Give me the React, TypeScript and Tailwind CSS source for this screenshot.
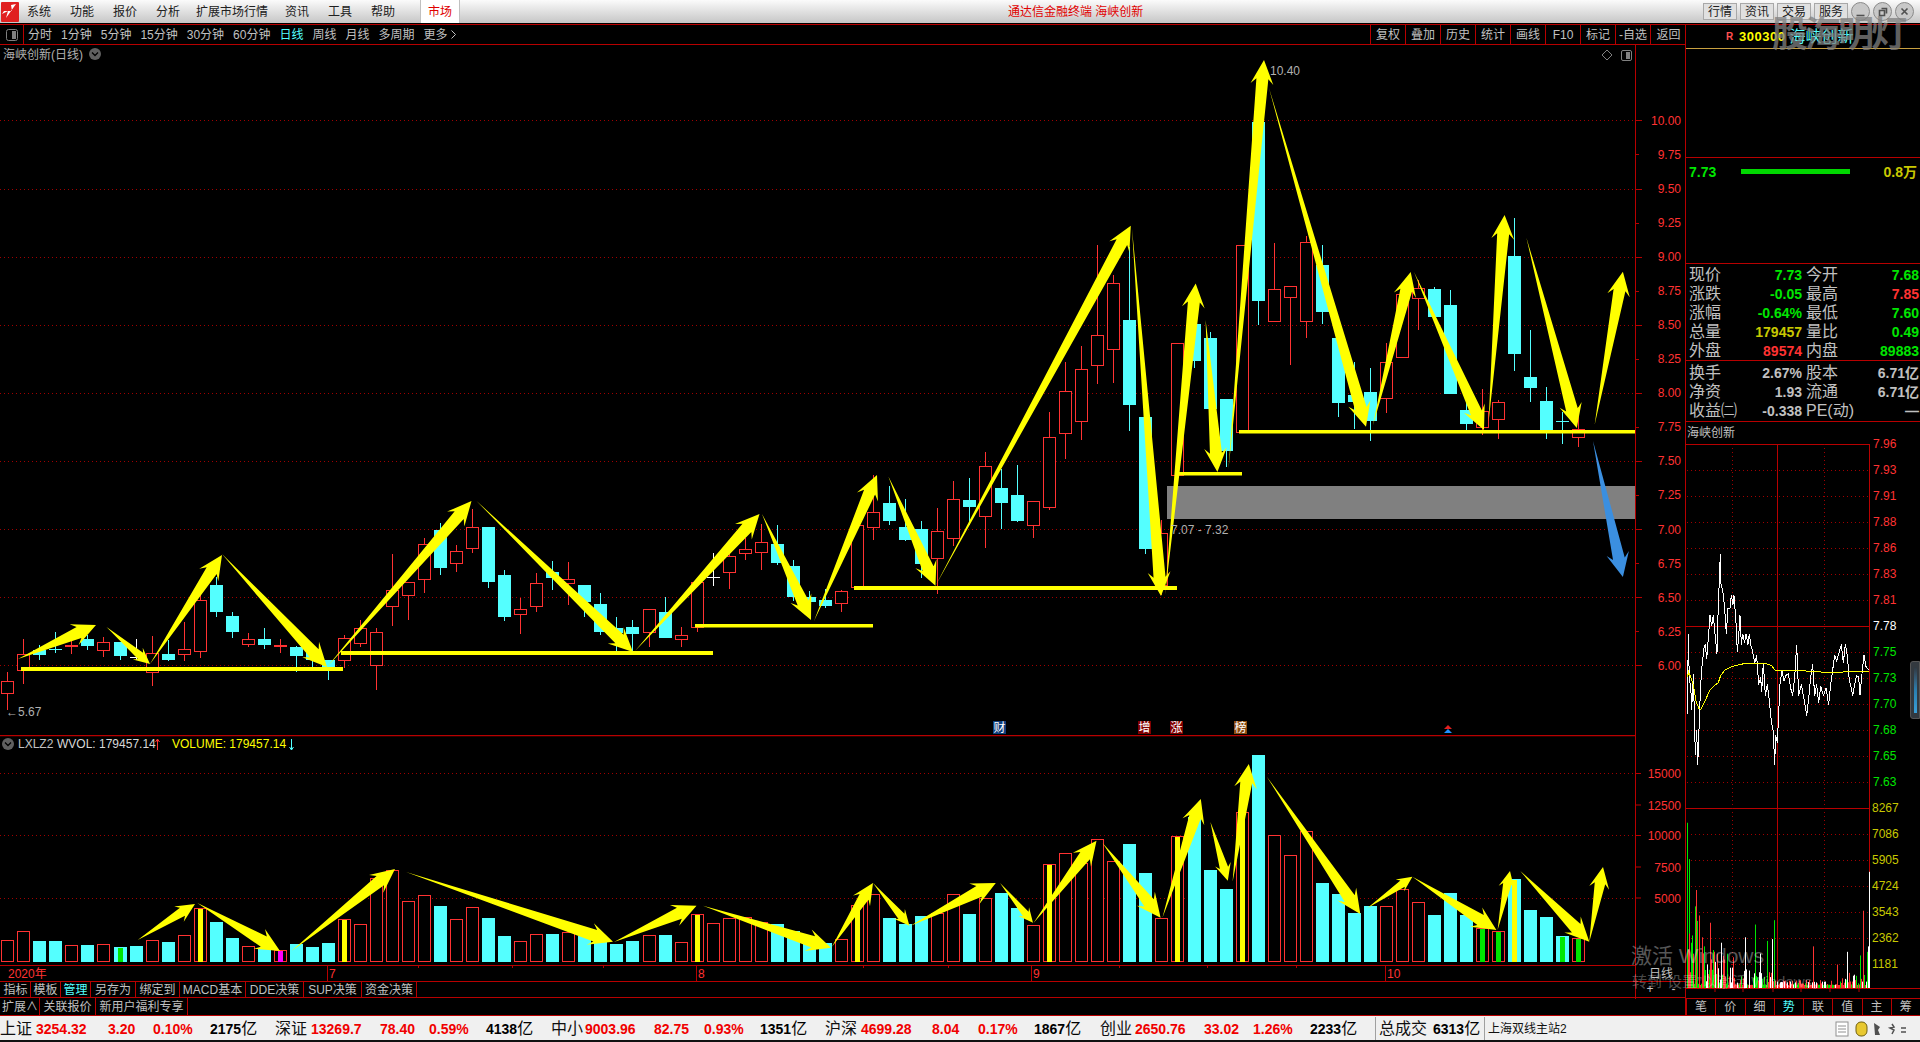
import { ReactNode } from "react";

const RED = "#b80000";
const DOT = "#a00000";
const CRED = "#ff3232";
const CYAN = "#54ffff";
const YEL = "#ffff00";

// [high, bodyTop, bodyBottom, low, colour] in page pixels. 0 red, 1 cyan, 2 white
const candles: number[][] = [
  [672, 681, 693, 710, 0], [639, 654, 670, 684, 0], [645, 650, 655, 660, 1], [632, 649, 650, 653, 1],
  [637, 645, 647, 654, 3], [635, 639, 646, 650, 1], [637, 642, 650, 657, 0], [642, 642, 656, 660, 1],
  [639, 657, 658, 660, 2], [636, 653, 672, 686, 0], [640, 654, 660, 661, 1], [622, 649, 654, 661, 0],
  [594, 600, 651, 658, 0], [577, 585, 612, 617, 1], [612, 616, 632, 638, 1], [633, 639, 644, 647, 0],
  [628, 639, 645, 649, 1], [639, 645, 647, 653, 3], [646, 647, 656, 672, 1], [648, 650, 660, 668, 1],
  [660, 660, 667, 680, 1], [635, 638, 660, 668, 0], [620, 628, 643, 647, 0], [628, 632, 665, 690, 0],
  [554, 590, 606, 626, 0], [582, 582, 595, 620, 0], [538, 544, 579, 593, 0], [523, 530, 568, 575, 1],
  [545, 551, 563, 572, 0], [509, 527, 548, 553, 0], [527, 527, 582, 588, 1], [570, 575, 617, 621, 1],
  [598, 609, 614, 634, 0], [573, 583, 606, 612, 0], [561, 572, 578, 590, 1], [562, 579, 583, 605, 0],
  [585, 585, 602, 617, 1], [593, 604, 632, 635, 1], [617, 628, 633, 652, 1], [620, 627, 634, 652, 1],
  [609, 609, 632, 647, 0], [597, 612, 638, 638, 1], [627, 635, 639, 647, 0], [582, 582, 627, 632, 0],
  [553, 577, 578, 586, 2], [550, 556, 572, 589, 0], [538, 549, 553, 560, 0], [524, 542, 552, 570, 0],
  [525, 544, 563, 565, 1], [560, 566, 597, 601, 1], [591, 597, 602, 604, 1], [589, 600, 606, 608, 1],
  [590, 591, 603, 612, 0], [525, 525, 587, 587, 0], [475, 512, 527, 540, 0], [486, 503, 521, 525, 1],
  [499, 527, 540, 541, 1], [521, 529, 564, 578, 1], [508, 531, 558, 594, 0], [481, 499, 538, 546, 0],
  [478, 500, 507, 525, 1], [452, 466, 516, 548, 0], [469, 488, 503, 529, 1], [465, 495, 521, 522, 1],
  [501, 501, 525, 538, 0], [412, 437, 507, 510, 0], [362, 391, 433, 459, 0], [346, 369, 421, 440, 0],
  [245, 335, 365, 384, 0], [275, 283, 349, 383, 0], [247, 320, 405, 431, 1], [417, 417, 549, 554, 1],
  [520, 533, 585, 595, 0], [343, 343, 475, 475, 0], [318, 324, 361, 368, 1], [332, 338, 409, 409, 1],
  [399, 399, 451, 467, 1], [245, 245, 432, 432, 0], [122, 122, 301, 325, 1], [243, 289, 321, 321, 0],
  [286, 286, 297, 365, 0], [236, 242, 321, 338, 0], [245, 265, 312, 324, 1], [338, 338, 403, 417, 1],
  [362, 395, 402, 429, 1], [368, 392, 421, 441, 1], [343, 362, 398, 413, 0], [294, 294, 357, 357, 0],
  [280, 288, 298, 330, 0], [287, 289, 317, 317, 1], [290, 305, 394, 394, 1], [400, 410, 424, 430, 1],
  [389, 411, 427, 435, 0], [400, 402, 419, 439, 0], [218, 256, 354, 371, 1], [330, 377, 388, 402, 1],
  [387, 401, 430, 439, 1], [412, 421, 422, 444, 1], [407, 429, 437, 447, 0],
];

// [top y, colour, centre mark]. 0 red hollow, 1 cyan. Marks: y yellow, g green, m magenta
const vols: [number, number, string?][] = [
  [631, 0], [604, 0], [633, 1], [633, 1], [646, 0], [645, 1], [643, 0], [651, 1, "g"], [648, 1], [631, 0],
  [636, 1], [616, 0], [534, 0, "y"], [576, 1], [624, 1], [649, 0], [655, 1], [661, 0, "m"], [642, 1], [651, 1],
  [639, 1], [568, 0, "y"], [583, 0], [445, 0], [421, 0], [514, 0], [496, 0], [528, 1], [568, 0], [532, 0],
  [564, 1], [618, 1], [634, 0], [613, 0], [612, 1], [607, 0], [618, 1], [635, 1], [642, 1], [633, 1],
  [616, 0], [615, 1], [637, 0], [553, 0, "y"], [580, 0], [565, 0], [560, 0], [575, 0], [582, 1], [603, 1],
  [620, 1], [640, 1], [628, 0], [526, 0, "y"], [493, 0], [564, 1], [582, 1], [558, 1], [548, 0], [493, 0],
  [552, 1], [505, 0], [489, 1], [534, 1], [586, 0], [403, 0, "y"], [370, 0], [400, 0], [328, 0], [394, 0],
  [342, 1], [429, 1], [565, 0], [318, 0, "y"], [262, 1], [420, 1], [477, 1], [247, 0, "y"], [75, 1], [316, 0],
  [376, 0], [304, 0], [459, 1], [492, 1], [549, 1], [528, 1], [529, 0], [478, 0], [517, 0], [555, 1],
  [489, 1], [555, 1], [595, 0, "g"], [604, 0, "g"], [447, 1, "y"], [540, 1], [561, 1], [618, 1, "g"], [625, 0, "g"],
];

const priceArrows = [
  [18, 659, 96, 625], [106.5, 627, 150, 664], [150, 664, 222, 555], [222, 554, 327, 667],
  [327, 667, 471.5, 501], [476.5, 501, 633, 652], [635, 651, 759.5, 514], [762, 514, 811, 620],
  [814, 621, 877, 475], [888.4, 476.5, 935.5, 585.7], [935.5, 585.7, 1130.8, 225.7], [1132, 228.7, 1161, 596],
  [1165, 595, 1195.7, 283.4], [1205.6, 320, 1217.4, 472], [1228.5, 469, 1264, 60], [1269, 88, 1366, 426.7],
  [1373, 425, 1410.7, 272], [1414, 272, 1484, 430], [1488.6, 421.7, 1504.6, 215], [1526.4, 237.7, 1576.8, 428],
  [1594.6, 425, 1622.9, 271.7],
];

const volArrows = [
  [137.7, 940, 195, 904], [197.4, 903, 280, 951], [291.5, 951, 395, 869], [406, 872, 613, 941.7],
  [614, 942, 696.5, 905.7], [703, 905.7, 831, 947.7], [832, 946.7, 873, 883], [873, 883, 909.4, 925.7],
  [910.6, 925.7, 995.8, 883], [1000, 883, 1033, 922.7], [1033.5, 923, 1096.5, 840.7], [1102.5, 843, 1160.6, 917.7],
  [1162.4, 917.7, 1200.8, 799], [1210.4, 822, 1227.8, 880.7], [1232.6, 881.7, 1248.8, 764], [1266.8, 776.7, 1360.3, 914],
  [1367.5, 908, 1412.4, 876.7], [1412.4, 876.7, 1496.4, 930], [1497.6, 930, 1510, 871], [1520.3, 871, 1589.3, 941.7],
  [1589.3, 941.7, 1603, 867],
];

const pricePts =
  "82,780 85,560 88,690 92,700 95,770 100,670 104,820 106,895 110,825 113,920 116,860 118,790 122,700 126,650 132,600 136,590 140,630 146,560 150,510 155,540 160,510 166,570 171,615 174,510 178,410 181,340 182,420 188,440 193,480 199,560 204,490 210,490 214,455 219,480 222,455 228,530 232,610 236,570 240,510 244,590 248,560 254,585 258,560 264,590 268,560 272,590 278,610 284,640 290,620 296,700 302,680 305,720 310,640 316,730 322,700 328,745 334,800 340,830 344,920 347,840 352,860 356,780 360,700 366,660 372,690 378,675 385,670 392,710 398,730 404,680 410,590 416,730 424,700 430,730 436,760 440,785 446,740 452,680 458,645 464,730 470,700 476,750 482,705 490,730 498,710 506,755 512,700 518,660 524,620 530,635 538,610 544,590 550,640 556,590 562,620 568,690 574,710 578,730 584,700 590,675 596,680 600,730 606,670 612,620 618,650 626,660";
const avgPts =
  "82,680 86,665 92,680 100,700 108,745 116,765 122,768 130,755 140,735 150,715 160,705 175,695 182,675 195,660 210,653 225,648 250,643 280,642 315,642 335,648 345,660 380,660 430,660 440,664 480,665 500,668 520,668 530,666 570,665 626,664";

// zoom coordinates of the intraday chart to page pixels
const toPage = (s: string) =>
  s
    .split(" ")
    .map((p) => {
      const [x, y] = p.split(",").map(Number);
      return `${1660 + x / 3},${430 + y / 2.75}`;
    })
    .join(" ");

const spikes: [number, number, string][] = [
  [82, 1080, "#00e600"], [86, 1180, "#00e600"], [88, 1385, "#ff3232"], [92, 1410, "#00e600"], [97, 1390, "#00e600"],
  [100, 1440, "#ff3232"], [105, 1310, "#00e600"], [108, 1265, "#ff3232"], [112, 1350, "#00e600"], [118, 1335, "#ff3232"],
  [127, 1395, "#ff3232"], [133, 1420, "#00e600"], [150, 1355, "#ff3232"], [160, 1430, "#00e600"], [183, 1410, "#ffffff"],
  [200, 1440, "#00e600"], [220, 1450, "#ff3232"], [256, 1395, "#ffffff"], [285, 1360, "#00e600"], [300, 1440, "#ffffff"],
  [320, 1405, "#00e600"], [335, 1400, "#ffffff"], [343, 1348, "#00e600"], [460, 1420, "#ff3232"], [530, 1470, "#ff3232"],
  [562, 1435, "#ffffff"], [600, 1445, "#00e600"], [610, 1322, "#ff3232"], [620, 1435, "#00e600"], [623, 1420, "#ffffff"],
  [628, 1215, "#ffffff"],
];

const miniBars = Array.from({ length: 183 }, (_, i) => {
  const x = 1687 + i;
  const n = Math.abs(Math.sin(i * 12.9898) * 43758.5453) % 1;
  const edge = i < 90 ? 1 - i / 130 : i > 145 ? (i - 145) / 50 : 0.12;
  const h = 3 + n * n * 42 * edge;
  const c = (n * 7) % 3 < 1 ? "#ff3232" : (n * 7) % 3 < 2 ? "#00e600" : "#ffffff";
  return { x, h, c };
});

const Arrow = ({ a, color = YEL }: { a: number[]; color?: string }) => {
  const [x1, y1, x2, y2] = a;
  const dx = x2 - x1;
  const dy = y2 - y1;
  const len = Math.hypot(dx, dy);
  const ux = dx / len;
  const uy = dy / len;
  const hl = Math.max(13, Math.min(24, len * 0.28));
  const hw = hl * 0.95;
  const nw = hl * 0.5;
  const nx = x2 - ux * hl * 0.78;
  const ny = y2 - uy * hl * 0.78;
  const bx = x2 - ux * hl;
  const by = y2 - uy * hl;
  const pts = [
    [x1, y1],
    [nx + uy * nw * 0.5, ny - ux * nw * 0.5],
    [bx + uy * hw * 0.5, by - ux * hw * 0.5],
    [x2, y2],
    [bx - uy * hw * 0.5, by + ux * hw * 0.5],
    [nx - uy * nw * 0.5, ny + ux * nw * 0.5],
  ];
  return <polygon points={pts.map((p) => p.join(",")).join(" ")} fill={color} />;
};

const cx = (i: number) => Math.round(7.3 + i * 16.03);

const PriceChart = () => {
  const labels = Array.from({ length: 17 }, (_, i) => ({ t: (10 - i * 0.25).toFixed(2), y: 120.4 + i * 34.05 }));
  return (
    <svg viewBox="0 45 1686 690" className="block w-[1686px] h-[690px]">
      {labels.map((l, i) =>
        i % 2 === 0 ? (
          <line key={l.t} x1="0" x2="1635" y1={Math.round(l.y) + 0.5} y2={Math.round(l.y) + 0.5} stroke={DOT} strokeDasharray="1 3" />
        ) : null,
      )}
      <rect x="1167" y="486" width="468" height="33" fill="#808080" />
      {candles.map(([h, t, b, l, c], i) => {
        const x = cx(i);
        const col = c === 0 || c === 3 ? CRED : c === 2 ? "#ffffff" : CYAN;
        return (
          <g key={i} stroke={col}>
            <line x1={x + 0.5} x2={x + 0.5} y1={h} y2={c === 0 ? t : b} />
            <line x1={x + 0.5} x2={x + 0.5} y1={b} y2={l} />
            {c === 0 ? (
              <rect x={x - 5.5} y={t + 0.5} width="12" height={b - t} fill="#000" />
            ) : (
              <rect x={x - 6} y={t} width="13" height={Math.max(b - t, 1)} fill={col} stroke="none" />
            )}
          </g>
        );
      })}
      <g fill={YEL}>
        <rect x="21" y="667" width="322" height="4" />
        <rect x="341" y="651" width="372" height="4" />
        <rect x="695" y="624" width="178" height="3.5" />
        <rect x="854" y="586" width="323" height="4" />
        <rect x="1178" y="472" width="64" height="3.5" />
        <rect x="1239" y="430" width="396" height="3.5" />
      </g>
      {priceArrows.map((a, i) => (
        <Arrow key={i} a={a} />
      ))}
      <Arrow a={[1593, 441, 1622.9, 577]} color="#3b8fe0" />
      <g fontSize="12" fill="#b0b0b0">
        <text x="1270" y="75">10.40</text>
        <text x="1171" y="534">7.07 - 7.32</text>
        <text x="6" y="716">←5.67</text>
        <text x="3" y="59">海峡创新(日线)</text>
      </g>
      <circle cx="95" cy="54" r="6" fill="#606060" />
      <path d="M92 52.5 l3 3 l3 -3" stroke="#000" fill="none" strokeWidth="1.3" />
      <path d="M1607 50 l5 5 l-5 5 l-5 -5 z" stroke="#808080" fill="none" />
      <rect x="1621.5" y="50.5" width="10" height="10" rx="1.5" stroke="#808080" fill="none" />
      <rect x="1626" y="52" width="4" height="7" fill="#808080" />
      <line x1="1635.5" x2="1635.5" y1="45" y2="735" stroke={RED} />
      {labels.map((l, i) => (
        <g key={l.t}>
          <line x1="1636" x2={i % 2 === 0 ? 1642 : 1639} y1={Math.round(l.y) + 0.5} y2={Math.round(l.y) + 0.5} stroke={RED} />
          <text x="1681" y={l.y + 4.5} textAnchor="end" fontSize="12" fill={CRED}>{l.t}</text>
        </g>
      ))}
      {/* event markers */}
      <g fontSize="12">
        <rect x="993" y="721" width="13" height="13" fill="#0f3d7a" />
        <text x="993.5" y="732" fill="#fff">财</text>
        <rect x="1138" y="721" width="13" height="13" fill="#800000" />
        <text x="1138.5" y="732" fill="#fff">增</text>
        <rect x="1170" y="721" width="13" height="13" fill="#800000" />
        <text x="1170.5" y="732" fill="#fff">涨</text>
        <rect x="1234" y="721" width="13" height="13" fill="#8b4a10" />
        <text x="1234.5" y="732" fill="#fff">榜</text>
      </g>
      <path d="M1448 725 l4 4 h-8 z" fill="#e02020" />
      <path d="M1448 729 l4 4 h-8 z" fill="#2090ff" />
    </svg>
  );
};

const VolumeChart = () => {
  const axis = [
    ["15000", 773.5], ["12500", 805], ["10000", 835.5], ["7500", 867], ["5000", 898],
  ] as [string, number][];
  const base = 962;
  return (
    <svg viewBox="0 735 1686 230" className="block w-[1686px] h-[230px]">
      <line x1="0" x2="1635" y1="735.5" y2="735.5" stroke={RED} strokeWidth="1.5" />
      {[773.5, 835.5, 898.5].map((y) => (
        <line key={y} x1="0" x2="1635" y1={y} y2={y} stroke={DOT} strokeDasharray="1 3" />
      ))}
      {vols.map(([z, c, m], i) => {
        const x = cx(i);
        const top = Math.round(730 + z / 3);
        return (
          <g key={i}>
            {c === 1 ? (
              <rect x={x - 6} y={top} width="13" height={base - top} fill={CYAN} />
            ) : (
              <rect x={x - 5.5} y={top + 0.5} width="12" height={base - top - 1} fill="#000" stroke={CRED} />
            )}
            {m && (
              <rect
                x={x - 2}
                y={top + 1}
                width="5"
                height={base - top - 1}
                fill={m === "y" ? YEL : m === "g" ? "#00e600" : "#ff00ff"}
              />
            )}
          </g>
        );
      })}
      {volArrows.map((a, i) => (
        <Arrow key={i} a={a} />
      ))}
      <circle cx="8" cy="744" r="6" fill="#606060" />
      <path d="M5 742.5 l3 3 l3 -3" stroke="#000" fill="none" strokeWidth="1.3" />
      <g fontSize="12">
        <text x="18" y="748" fill="#c0c0c0">LXLZ2</text>
        <text x="57" y="748" fill="#d8d8d8">WVOL: 179457.14</text>
        <text x="172" y="748" fill={YEL}>VOLUME: 179457.14</text>
      </g>
      <path d="M157.5 739 v11 M155.5 742 l2 -3 l2 3" stroke={CRED} fill="none" />
      <path d="M291.5 739 v11 M289.5 747 l2 3 l2 -3" stroke={CYAN} fill="none" />
      <line x1="1635.5" x2="1635.5" y1="735" y2="965" stroke={RED} />
      {axis.map(([t, y]) => (
        <g key={t}>
          <line x1="1636" x2="1641" y1={y} y2={y} stroke={RED} />
          <text x="1681" y={y + 4.5} textAnchor="end" fontSize="12" fill={CRED}>{t}</text>
        </g>
      ))}
    </svg>
  );
};

const DateRow = () => (
  <svg viewBox="0 965 1686 17" className="block w-[1686px] h-[17px]">
    <line x1="0" x2="1635" y1="965.5" y2="965.5" stroke={RED} />
    <line x1="0" x2="1686" y1="981.5" y2="981.5" stroke={RED} />
    {[327, 696, 1031, 1385].map((x) => (
      <line key={x} x1={x + 0.5} x2={x + 0.5} y1="965" y2="981" stroke={RED} />
    ))}
    {[418, 512, 603, 863, 948, 1119, 1207, 1296].map((x) => (
      <line key={x} x1={x + 0.5} x2={x + 0.5} y1="965" y2="968" stroke={RED} />
    ))}
    <g fontSize="12" fill={CRED}>
      <text x="8" y="978">2020年</text>
      <text x="329" y="978">7</text>
      <text x="698" y="978">8</text>
      <text x="1033" y="978">9</text>
      <text x="1387" y="978">10</text>
    </g>
  </svg>
);

const Btn = ({ w, children, active }: { w: string; children: ReactNode; active?: boolean }) => (
  <div className={`${w} h-full flex items-center justify-center border-r border-[#b80000] text-xs ${active ? "text-[#54ffff]" : "text-[#c0c0c0]"}`}>
    {children}
  </div>
);

const Toolbar = () => (
  <div className="h-[21px] flex border-y border-[#b80000] text-xs text-[#c0c0c0]">
    <div className="w-[24px] border-r border-[#b80000] flex items-center justify-center">
      <svg width="12" height="12" viewBox="0 0 12 12">
        <rect x="0.5" y="0.5" width="11" height="11" rx="2" fill="none" stroke="#808080" />
        <rect x="6" y="2" width="4" height="8" fill="#808080" />
      </svg>
    </div>
    <div className="flex items-center gap-[9px] pl-[4px]">
      <span>分时</span>
      <span>1分钟</span>
      <span>5分钟</span>
      <span>15分钟</span>
      <span>30分钟</span>
      <span>60分钟</span>
      <span className="text-[#54ffff]">日线</span>
      <span>周线</span>
      <span>月线</span>
      <span>多周期</span>
      <span className="flex items-center gap-[3px]">
        更多
        <svg width="5" height="9" viewBox="0 0 5 9">
          <path d="M0.5 0.5 L4.5 4.5 L0.5 8.5" stroke="#c0c0c0" fill="none" />
        </svg>
      </span>
    </div>
    <div className="ml-auto flex">
      {["复权", "叠加", "历史", "统计", "画线", "F10", "标记", "-自选", "返回"].map((t) => (
        <div key={t} className="w-[35px] last:w-[36px] flex items-center justify-center border-l border-[#b80000]">{t}</div>
      ))}
    </div>
  </div>
);

const TitleBar = () => (
  <div className="h-[23px] flex items-center bg-linear-to-b from-[#fbfbfb] to-[#c6c6c6] text-xs text-[#202020] relative">
    <svg width="18" height="20" viewBox="0 0 18 20" className="ml-[1px]">
      <rect width="18" height="20" rx="1" fill="#e02020" />
      <path d="M1 12 L7 9 L5 16 L15 2 L10 3 L11 9 L3 9 Z" fill="#fff" />
    </svg>
    <div className="flex ml-[8px] gap-[19px]">
      <span>系统</span>
      <span>功能</span>
      <span>报价</span>
      <span>分析</span>
      <span className="-ml-[3px]">扩展市场行情</span>
      <span className="-ml-[2px]">资讯</span>
      <span>工具</span>
      <span>帮助</span>
    </div>
    <div className="ml-[25px] w-[40px] h-full flex items-center justify-center border-x border-[#c0c0c0] bg-white text-[#e00000]">市场</div>
    <div className="absolute left-[1008px] top-[4px] text-[#e00000]">通达信金融终端 海峡创新</div>
    <div className="ml-auto flex gap-[3px] pr-[72px]">
      {["行情", "资讯", "交易", "服务"].map((t) => (
        <div key={t} className="w-[34px] h-[17px] flex items-center justify-center border border-[#a8a8a8] bg-[#e0e0e0]">{t}</div>
      ))}
    </div>
    {/* window controls */}
    <div className="absolute right-[6px] top-[2px] flex gap-[3px]">
      {["M-4 4 h8", "M-3 -1 h5 v5 h-5 z M-1 -3 h5 v5", "M-3 -3 L3 3 M3 -3 L-3 3"].map((d) => (
        <svg key={d} width="19" height="19" viewBox="-9.5 -9.5 19 19">
          <circle r="9" fill="#c8c8c8" stroke="#8a8a8a" />
          <path d={d} stroke="#505050" strokeWidth="1.6" fill="none" />
        </svg>
      ))}
    </div>
  </div>
);

const Row = ({ a, av, ac, b, bv, bc }: { a: string; av: ReactNode; ac: string; b: string; bv: ReactNode; bc: string }) => (
  <div className="flex h-[19px] items-center pl-[3px]">
    <div className="w-[113px] flex items-center justify-between">
      <span className="text-base text-[#c0c0c0]">{a}</span>
      <span className={`text-sm font-bold ${ac}`}>{av}</span>
    </div>
    <div className="w-[113px] ml-[4px] flex items-center justify-between">
      <span className="text-base text-[#c0c0c0]">{b}</span>
      <span className={`text-sm font-bold ${bc}`}>{bv}</span>
    </div>
  </div>
);

const G = "text-[#00e600]";
const R = "text-[#ff3232]";
const Y = "text-[#c8c800]";
const W = "text-[#c0c0c0]";

const Intraday = () => {
  const left = ["7.96", "7.93", "7.91", "7.88", "7.86", "7.83", "7.81", "7.78", "7.75", "7.73", "7.70", "7.68", "7.65", "7.63"];
  const right = ["8267", "7086", "5905", "4724", "3543", "2362", "1181"];
  return (
    <svg viewBox="1686 443 234 555" className="block w-[234px] h-[555px] overflow-visible">
      {left.map((t, i) => {
        const y = Math.round(443.5 + i * 26) + 0.5;
        return i === 0 || i === 7 ? (
          <line key={t} x1="1686" x2="1870" y1={y} y2={y} stroke={RED} />
        ) : (
          <line key={t} x1="1687" x2="1869" y1={y} y2={y} stroke={DOT} strokeDasharray="1 3" />
        );
      })}
      {right.map((t, i) => {
        const y = Math.round(807.5 + i * 26) + 0.5;
        return i === 0 ? (
          <line key={t} x1="1686" x2="1870" y1={y} y2={y} stroke={RED} />
        ) : (
          <line key={t} x1="1687" x2="1869" y1={y} y2={y} stroke={DOT} strokeDasharray="1 3" />
        );
      })}
      {[1732.5, 1824.5].map((x) => (
        <line key={x} x1={x} x2={x} y1="444" y2="988" stroke={DOT} strokeDasharray="1 3" />
      ))}
      <line x1="1777.5" x2="1777.5" y1="444" y2="988" stroke={RED} />
      <line x1="1869.5" x2="1869.5" y1="444" y2="988" stroke={RED} />
      <line x1="1686" x2="1920" y1="988.5" y2="988.5" stroke={RED} />
      {miniBars.map((b) => (
        <rect key={b.x} x={b.x} y={988 - b.h} width="1" height={b.h} fill={b.c} />
      ))}
      {spikes.map(([x, z, c]) => {
        const top = 430 + z / 2.75;
        return <rect key={x} x={Math.round(1660 + x / 3)} y={top} width="1" height={988 - top} fill={c} />;
      })}
      <polyline points={toPage(pricePts)} fill="none" stroke="#fff" shapeRendering="crispEdges" />
      <polyline points={toPage(avgPts)} fill="none" stroke={YEL} shapeRendering="crispEdges" />
      <g fontSize="12">
        {left.map((t, i) => (
          <text key={t} x="1873" y={443.5 + i * 26 + 4.5} fill={i < 7 ? CRED : i === 7 ? "#ffffff" : "#00e600"}>{t}</text>
        ))}
        {right.map((t, i) => (
          <text key={t} x="1872" y={807.5 + i * 26 + 4.5} fill="#c8c800">{t}</text>
        ))}
      </g>
      {[1715, 1743, 1773, 1801, 1830, 1859].map((x) => (
        <line key={x} x1={x} x2={x} y1="988" y2="992" stroke={RED} />
      ))}
    </svg>
  );
};

const RightPanel = () => (
  <div className="w-[234px] flex flex-col border-[#b80000]">
    <div className="h-[25px] flex items-center border-t border-[#b80000] border-b border-b-[#c8a040] relative">
      <span className="absolute left-[40px] top-[4px] text-[10px] font-bold text-[#ff5050]">R</span>
      <span className="ml-[53px] text-[13px] font-bold tracking-[0.5px] text-[#ffff00]">300300</span>
      <span className="ml-[4px] text-base text-[#54ffff]">海峡创新</span>
    </div>
    <div className="h-[109px] border-b border-[#b80000]" />
    <div className="h-[106px] border-b border-[#b80000]">
      <div className="flex items-center h-[27px] px-[3px] text-sm font-bold">
        <span className="text-[#00e600] w-[52px]">7.73</span>
        <span className="w-[109px] h-[5px] bg-[#00d800]" />
        <span className="ml-auto text-[#c8c800]">0.8万</span>
      </div>
    </div>
    <div className="h-[97px] pt-px border-b border-[#b80000]">
      <Row a="现价" av="7.73" ac={G} b="今开" bv="7.68" bc={G} />
      <Row a="涨跌" av="-0.05" ac={G} b="最高" bv="7.85" bc={R} />
      <Row a="涨幅" av="-0.64%" ac={G} b="最低" bv="7.60" bc={G} />
      <Row a="总量" av="179457" ac={Y} b="量比" bv="0.49" bc={G} />
      <Row a="外盘" av="89574" ac={R} b="内盘" bv="89883" bc={G} />
    </div>
    <div className="h-[61px] pt-[2px] border-b border-[#b80000]">
      <Row a="换手" av="2.67%" ac={W} b="股本" bv="6.71亿" bc={W} />
      <Row a="净资" av="1.93" ac={W} b="流通" bv="6.71亿" bc={W} />
      <Row a="收益㈡" av="-0.338" ac={W} b="PE(动)" bv="—" bc={W} />
    </div>
    <div className="h-[21px] pl-[1px] flex items-center text-xs text-[#c0c0c0]">海峡创新</div>
    <Intraday />
    <div className="h-[18px] flex border-y border-[#b80000] text-xs text-[#c0c0c0]">
      {["笔", "价", "细", "势", "联", "值", "主", "筹"].map((t) => (
        <div key={t} className={`flex-1 flex items-center justify-center border-l border-[#b80000] ${t === "势" ? "text-[#54ffff]" : ""}`}>{t}</div>
      ))}
    </div>
  </div>
);

const Stat = ({ cols, name, v, c, p, amt }: { cols: string; name: string; v: string; c: string; p: string; amt: string }) => (
  <div className={`grid items-center ${cols}`}>
    <span className="text-base text-[#101010]">{name}</span>
    <span className="text-sm font-bold text-[#f00000]">{v}</span>
    <span className="text-sm font-bold text-[#f00000]">{c}</span>
    <span className="text-sm font-bold text-[#f00000]">{p}</span>
    <span className="text-sm font-bold text-[#000]">
      {amt}
      <span className="text-base font-normal">亿</span>
    </span>
  </div>
);

const StatusBar = () => (
  <div className="h-[24px] pt-px flex items-center bg-[#f0f0f0] whitespace-nowrap">
    <Stat cols="grid-cols-[36px_72px_45px_57px_65px]" name="上证" v="3254.32" c="3.20" p="0.10%" amt="2175" />
    <Stat cols="grid-cols-[36px_69px_49px_57px_65px]" name="深证" v="13269.7" c="78.40" p="0.59%" amt="4138" />
    <Stat cols="grid-cols-[34px_69px_50px_56px_65px]" name="中小" v="9003.96" c="82.75" p="0.93%" amt="1351" />
    <Stat cols="grid-cols-[36px_71px_46px_56px_66px]" name="沪深" v="4699.28" c="8.04" p="0.17%" amt="1867" />
    <Stat cols="grid-cols-[35px_69px_49px_57px_65px]" name="创业" v="2650.76" c="33.02" p="1.26%" amt="2233" />
    <div className="w-[109px] h-full flex items-center border-l border-[#a0a0a0] pl-[3px]">
      <span className="text-base text-[#101010]">总成交</span>
      <span className="ml-[6px] text-sm font-bold text-black">6313</span>
      <span className="text-base text-black">亿</span>
    </div>
    <div className="flex-1 h-full flex items-center border-l border-[#a0a0a0] pl-[3px] text-xs text-[#101010]">
      上海双线主站2
      <svg width="76" height="16" viewBox="0 0 76 16" className="ml-auto mr-[9px]">
        <rect x="1" y="1" width="12" height="14" fill="#fff" stroke="#909090" />
        <path d="M3 5 h8 M3 8 h8 M3 11 h8" stroke="#909090" />
        <rect x="21" y="1" width="11" height="14" rx="5" fill="#e8c830" stroke="#706010" />
        <path d="M39 2 l6 4 l-2 3 l2 5 h-5 z" fill="#505050" />
        <path d="M57 3 l2 3 l-4 1 l4 2 l-2 4 M66 7 h5 M66 11 h5" stroke="#505050" fill="none" strokeWidth="1.5" />
      </svg>
    </div>
  </div>
);

export default function App() {
  return (
    <div className="w-[1920px] h-[1042px] bg-black overflow-hidden relative font-['Liberation_Sans','Noto_Sans_CJK_SC',sans-serif]">
      <TitleBar />
      <div className="h-px bg-black" />
      <div className="flex h-[992px]">
        {/* Left side */}
        <div className="w-[1686px] flex flex-col border-r-0">
          <Toolbar />
          <PriceChart />
          <VolumeChart />
          <DateRow />
          <div className="h-[16px] flex border-b border-[#b80000] pl-px">
            <Btn w="w-[30px]">指标</Btn>
            <Btn w="w-[30px]">模板</Btn>
            <Btn w="w-[30px]" active>管理</Btn>
            <Btn w="w-[45px]">另存为</Btn>
            <Btn w="w-[44px]">绑定到</Btn>
            <Btn w="w-[66px]">MACD基本</Btn>
            <Btn w="w-[58px]">DDE决策</Btn>
            <Btn w="w-[58px]">SUP决策</Btn>
            <Btn w="w-[55px]">资金决策</Btn>
          </div>
          <div className="h-[18px] flex border-b border-[#b80000] pl-px">
            <Btn w="w-[39px]">扩展∧</Btn>
            <Btn w="w-[56px]">关联报价</Btn>
            <Btn w="w-[92px]">新用户福利专享</Btn>
          </div>
        </div>
        <div className="w-px bg-[#b80000] -ml-px" />
        <RightPanel />
      </div>
      <StatusBar />
      <div className="h-[2px] bg-[#101010]" />

      {/* chart period switch over the axis corner */}
      <div className="absolute left-[1635px] top-[965px] w-[51px] h-[34px] border-l border-[#b80000] text-xs text-[#c0c0c0] flex flex-col items-center pt-px">
        <span>日线</span>
        <span className="tracking-[18px] pl-[18px] leading-[14px]">+-</span>
      </div>

      {/* watermarks */}
      <div className="absolute left-[1772px] top-[14px] text-[36px] font-bold leading-[42px] tracking-[-3px] text-[#808080]/75 whitespace-nowrap">股海明灯</div>
      <div className="absolute left-[1631px] top-[943px] text-[21px] leading-[26px] text-white/35 whitespace-nowrap">激活 Windows</div>
      <div className="absolute left-[1632px] top-[972px] text-[15px] leading-[20px] text-white/30 whitespace-nowrap">转到“设置”以激活 Windows。</div>

      {/* side slider widget */}
      <div className="absolute left-[1910px] top-[661px] w-[10px] h-[58px] rounded-l-[3px] bg-[#33393f] border border-[#555] flex justify-center py-[5px]">
        <div className="w-[3px] h-full bg-linear-to-b from-[#303840] via-[#2a7fb0] to-[#3aa0d8]" />
      </div>
    </div>
  );
}
